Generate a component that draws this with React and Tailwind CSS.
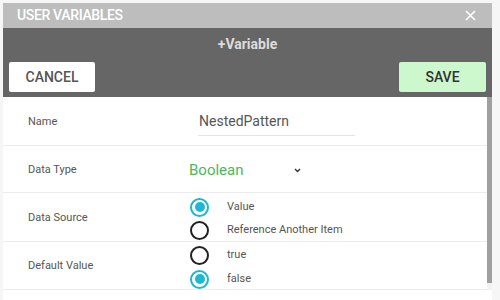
import React from 'react';

function Radio({ checked }) {
  return checked ? (
    <span className="w-[19px] h-[19px] rounded-full border-2 border-[#1cb8d4] flex items-center justify-center shrink-0">
      <span className="w-[10px] h-[10px] rounded-full bg-[#1cb8d4]" />
    </span>
  ) : (
    <span className="w-[19px] h-[19px] rounded-full border-2 border-[#222] shrink-0" />
  );
}

function Row({ label, children, h }) {
  return (
    <div className={`flex items-center border-b border-[#ececec] ${h}`}>
      <div className="w-[186px] pl-[25px] pt-[2px] text-[11px] text-[#555]">{label}</div>
      <div className="flex-1">{children}</div>
    </div>
  );
}

export default function App() {
  return (
    <div className="w-[500px] h-[300px] bg-[#f6f6f6] pt-[3px] pl-[3px] overflow-hidden" style={{ fontFamily: 'Roboto, "Noto Sans", sans-serif' }}>
      <div className="w-[489px] h-[297px] flex flex-col bg-white">
        <div className="h-[25px] bg-[#bdbdbd] flex items-center justify-between pl-[14px] pr-[16px]">
          <span className="text-white text-[14px] font-medium tracking-tight">USER VARIABLES</span>
          <svg width="11" height="11" viewBox="0 0 11 11" stroke="white" strokeWidth="1.6">
            <path d="M1 1L10 10M10 1L1 10" />
          </svg>
        </div>
        <div className="h-[69px] bg-[#666666] flex flex-col px-[6px] pt-[7px]">
          <div className="text-center text-[#dcdcdc] text-[14px] font-bold leading-[18px]">+Variable</div>
          <div className="flex justify-between mt-[9px]">
            <button className="w-[86px] h-[30px] bg-white rounded-[2px] text-[#555] text-[14px] font-medium">CANCEL</button>
            <button className="w-[87px] h-[30px] bg-[#cdf7cd] rounded-[2px] text-[#333] text-[14px] font-medium">SAVE</button>
          </div>
        </div>
        <div className="flex flex-1">
          <div className="flex-1 flex flex-col">
            <Row label="Name" h="h-[49px]">
              <div className="ml-[9px] mt-[4px] w-[157px] border-b border-[#e4e4e4] pb-[3px] pl-[1px] text-[14px] text-[#555]">NestedPattern</div>
            </Row>
            <Row label="Data Type" h="h-[47px]">
              <div className="flex items-center mt-[2px] w-[112px] justify-between">
                <span className="text-[15px] text-[#4cb85a]">Boolean</span>
                <svg width="7" height="5" viewBox="0 0 7 5" fill="none" stroke="#333" strokeWidth="1.4">
                  <path d="M1 1L3.5 3.5L6 1" />
                </svg>
              </div>
            </Row>
            <Row label="Data Source" h="h-[49px]">
              <div className="flex flex-col gap-[4px] ml-[1px] mt-[3px]">
                <div className="flex items-center gap-[18px]"><Radio checked /><span className="text-[11px] text-[#555]">Value</span></div>
                <div className="flex items-center gap-[18px]"><Radio /><span className="text-[11px] text-[#555]">Reference Another Item</span></div>
              </div>
            </Row>
            <Row label="Default Value" h="h-[48px]">
              <div className="flex flex-col gap-[5px] ml-[1px] mt-[3px]">
                <div className="flex items-center gap-[18px]"><Radio /><span className="text-[11px] text-[#555]">true</span></div>
                <div className="flex items-center gap-[18px]"><Radio checked /><span className="text-[11px] text-[#555]">false</span></div>
              </div>
            </Row>
          </div>
          <div className="w-[5px] bg-[#f2f2f2] h-[193px]">
            <div className="h-[186px] bg-[#a0a0a0]" />
          </div>
        </div>
      </div>
    </div>
  );
}
